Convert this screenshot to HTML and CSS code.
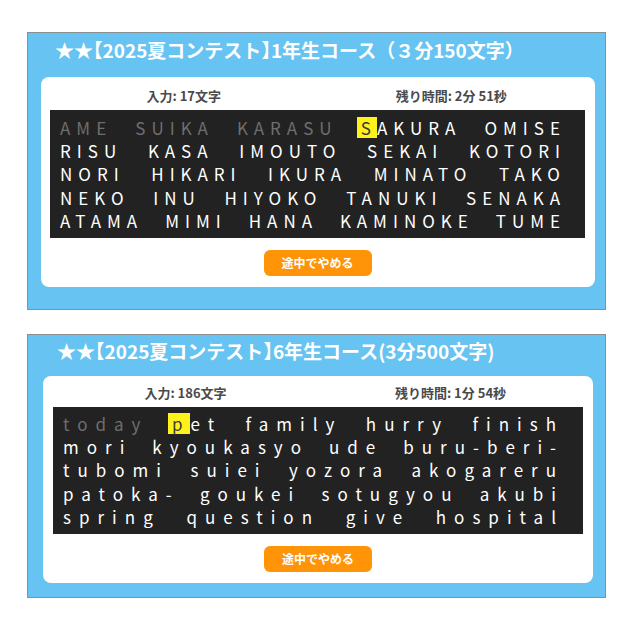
FILE: index.html
```html
<!DOCTYPE html>
<html lang="ja">
<head>
<meta charset="utf-8">
<title>タイピング</title>
<link rel="stylesheet" href="styles.css">
</head>
<body>
<div class="page">
  <section class="panel panel-a">
    <h2 class="title">★★<span class="br">【</span>2025夏コンテスト<span class="br">】</span>1年生コース（３分150文字）</h2>
    <div class="card">
      <div class="status">
        <div class="stat">入力: 17文字</div>
        <div class="stat">残り時間: 2分 51秒</div>
      </div>
      <div class="screen">
        <div class="line"><span class="done">AME SUIKA KARASU</span> <span class="cur">S</span>AKURA OMISE</div>
        <div class="line">RISU KASA IMOUTO SEKAI KOTORI</div>
        <div class="line">NORI HIKARI IKURA MINATO TAKO</div>
        <div class="line">NEKO INU HIYOKO TANUKI SENAKA</div>
        <div class="line">ATAMA MIMI HANA KAMINOKE TUME</div>
      </div>
      <div class="actions"><button class="quit">途中でやめる</button></div>
    </div>
  </section>
  <section class="panel panel-b">
    <h2 class="title">★★<span class="br">【</span>2025夏コンテスト<span class="br">】</span>6年生コース(3分500文字)</h2>
    <div class="card">
      <div class="status">
        <div class="stat">入力: 186文字</div>
        <div class="stat">残り時間: 1分 54秒</div>
      </div>
      <div class="screen">
        <div class="line"><span class="done">today</span> <span class="cur">p</span>et family hurry finish</div>
        <div class="line">mori kyoukasyo ude buru-beri-</div>
        <div class="line">tubomi suiei yozora akogareru</div>
        <div class="line">patoka- goukei sotugyou akubi</div>
        <div class="line">spring question give hospital</div>
      </div>
      <div class="actions"><button class="quit">途中でやめる</button></div>
    </div>
  </section>
</div>
</body>
</html>
```
FILE: styles.css
```css
* { box-sizing: border-box; }
html, body { margin: 0; padding: 0; background: #ffffff; }
body { font-family: "Noto Sans CJK JP", "Noto Sans", sans-serif; }

.page {
  padding-top: 32px;
  padding-left: 27px;
}

.panel {
  width: 579px;
  background: #66c3f2;
  border: 1px solid #8a8f94;
}

.panel-a { padding: 8px 10px 22px 13px; }
.panel-b { margin-top: 24px; padding: 7px 12px 14px 15px; }

.title {
  margin: 0 0 18px 0;
  padding-left: 14px;
  font-size: 19px;
  line-height: 18px;
  font-weight: 700;
  color: #ffffff;
  white-space: nowrap;
}
.panel-b .title { margin-bottom: 16px; }
.br { font-feature-settings: "halt"; }

.card {
  background: #ffffff;
  border-radius: 8px;
  padding: 11px 10px 11px 9px;
}
.panel-b .card { padding: 9px 10px 11px 10px; }

.status {
  display: flex;
  height: 16px;
  margin-bottom: 6px;
}
.stat {
  flex: 1;
  text-align: center;
  font-size: 13px;
  line-height: 16px;
  font-weight: 700;
  color: #4a4a4a;
}

.screen {
  background: #222222;
  padding: 6px 19px 6px 10px;
  color: #ffffff;
  font-size: 17px;
  font-weight: 400;
  letter-spacing: 6px;
}
.panel-b .screen { padding: 5px 19px 6px 10px; letter-spacing: 8px; }

.line {
  height: 23.2px;
  line-height: 23.2px;
  text-align: justify;
  text-align-last: justify;
}

.done { color: #6e6e6e; }
.cur {
  display: inline-block;
  line-height: 21px;
  background: #fff21a;
  color: #3a3a3a;
  padding-left: 4px;
  margin-left: -4px;
}

.actions {
  display: flex;
  justify-content: center;
  padding-top: 12px;
}
.quit {
  width: 108px;
  height: 26px;
  border: none;
  border-radius: 6px;
  background: #ff9408;
  color: #ffffff;
  font-family: "Noto Sans CJK JP", sans-serif;
  font-size: 12px;
  font-weight: 700;
  padding: 0;
}
```
